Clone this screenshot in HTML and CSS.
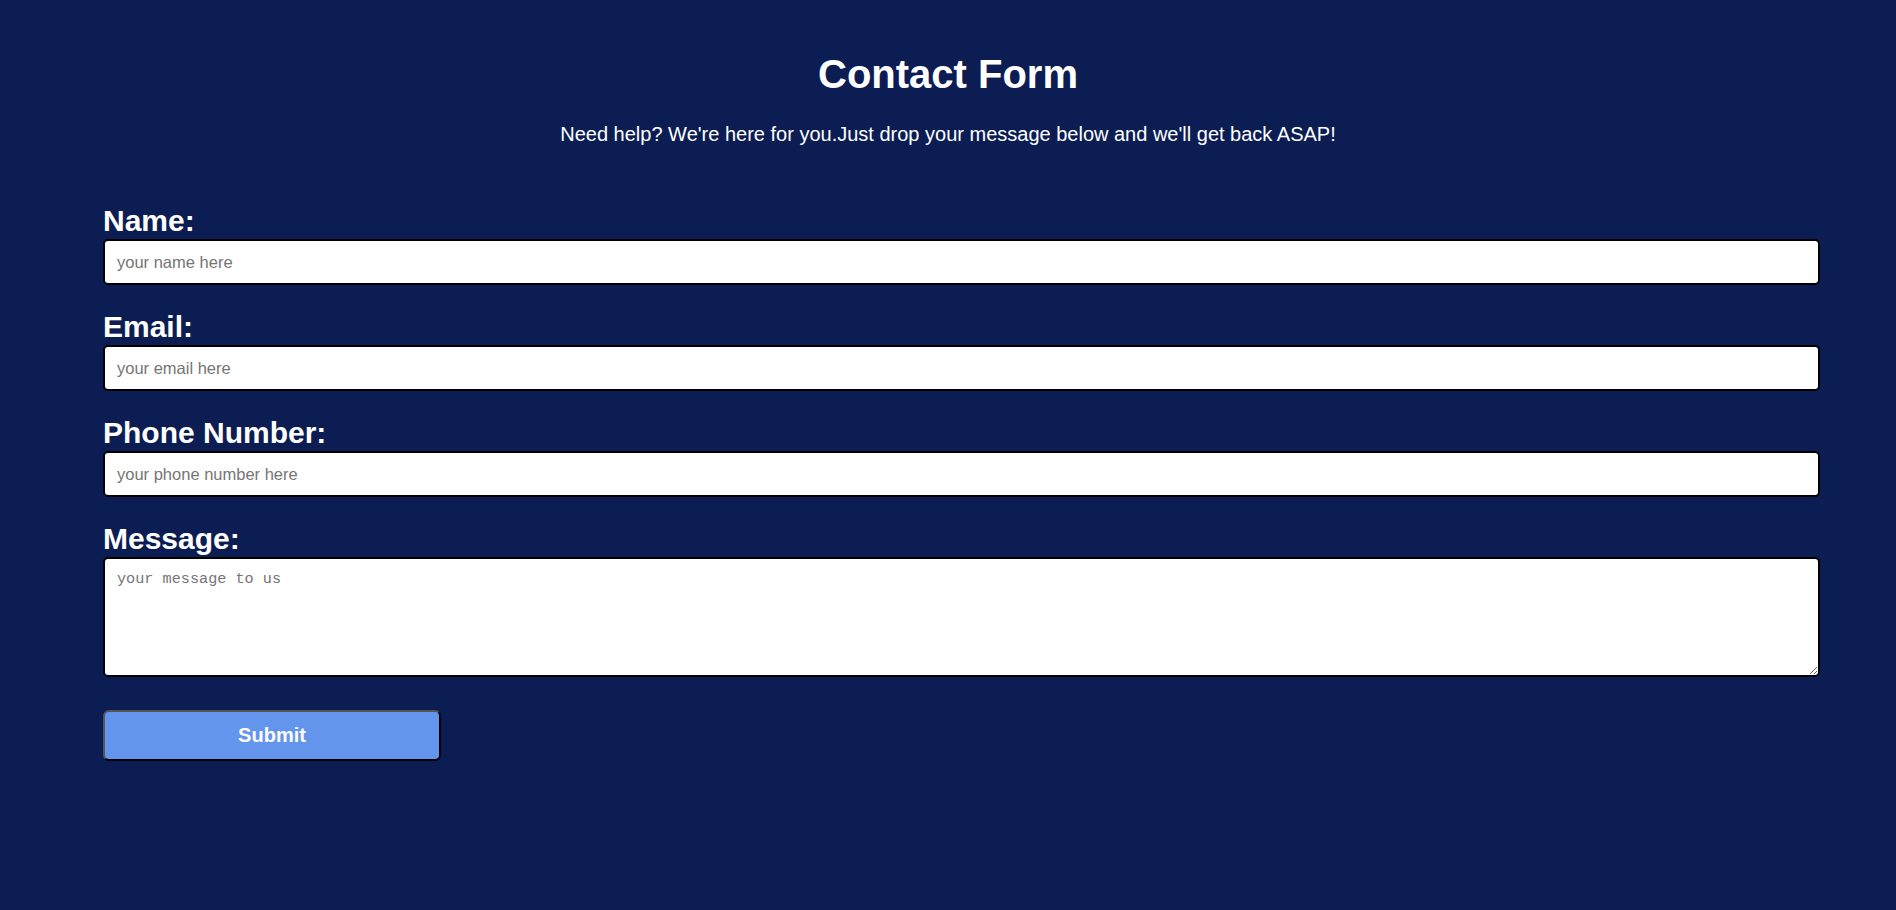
FILE: index.html
```html
<!DOCTYPE html>
<html lang="en">
<head>
<meta charset="utf-8">
<title>Contact Form</title>
<link rel="stylesheet" href="styles.css">
</head>
<body>
  <header class="intro">
    <h1 class="title">Contact Form</h1>
    <p class="subtitle">Need help? We're here for you.Just drop your message below and we'll get back ASAP!</p>
  </header>
  <form class="contact-form">
    <div class="field">
      <label class="field-label" for="name">Name:</label>
      <input class="field-input" type="text" id="name" placeholder="your name here">
    </div>
    <div class="field">
      <label class="field-label" for="email">Email:</label>
      <input class="field-input" type="email" id="email" placeholder="your email here">
    </div>
    <div class="field">
      <label class="field-label" for="phone">Phone Number:</label>
      <input class="field-input" type="tel" id="phone" placeholder="your phone number here">
    </div>
    <div class="field field-last">
      <label class="field-label" for="message">Message:</label>
      <textarea class="field-textarea" id="message" placeholder="your message to us"></textarea>
    </div>
    <button class="submit-btn" type="submit">Submit</button>
  </form>
</body>
</html>
```
FILE: styles.css
```css
html, body {
  margin: 0;
  padding: 0;
}

body {
  background: #0b1d52;
  color: #ffffff;
  font-family: "Liberation Sans", Arial, sans-serif;
  min-height: 910px;
}

.intro {
  text-align: center;
  padding-top: 51px;
}

.title {
  margin: 0;
  font-size: 40px;
  line-height: 46px;
  font-weight: 700;
}

.subtitle {
  margin: 26px 0 0;
  font-size: 20px;
  line-height: 23px;
}

.contact-form {
  padding: 58px 76px 0 103px;
  display: flex;
  flex-direction: column;
  align-items: flex-start;
}

.field {
  width: 100%;
  display: flex;
  flex-direction: column;
  margin-bottom: 25px;
}

.field-last {
  margin-bottom: 33px;
}

.field-label {
  font-size: 30px;
  line-height: 34px;
  font-weight: 700;
  margin-bottom: 1px;
}

.field-input,
.field-textarea {
  box-sizing: border-box;
  width: 100%;
  margin: 0;
  background: #ffffff;
  border: 2px solid #000000;
  border-radius: 5px;
  color: #000;
  outline: none;
}

.field-input {
  height: 46px;
  padding: 0 12px;
  font-family: "Liberation Sans", Arial, sans-serif;
  font-size: 16.5px;
}

.field-textarea {
  height: 120px;
  padding: 11px 12px;
  font-family: "Liberation Mono", "DejaVu Sans Mono", monospace;
  font-size: 15.2px;
  line-height: 19px;
  resize: vertical;
}

.field-input::placeholder,
.field-textarea::placeholder {
  color: #757575;
  opacity: 1;
}

.submit-btn {
  box-sizing: border-box;
  width: 338px;
  height: 51px;
  background: #6495ed;
  color: #ffffff;
  font-family: "Liberation Sans", Arial, sans-serif;
  font-size: 20px;
  font-weight: 700;
  border: 2px solid;
  border-color: #555555 #000000 #000000 #555555;
  border-radius: 6px;
  cursor: pointer;
}
```
